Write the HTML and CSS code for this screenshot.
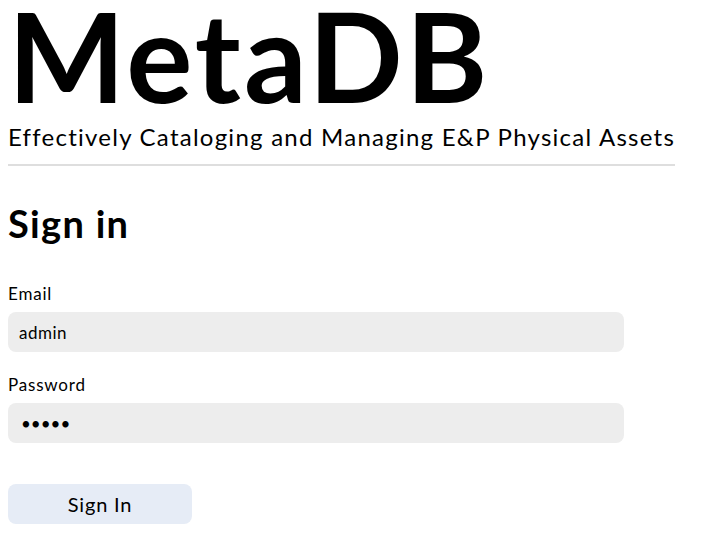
FILE: index.html
```html
<!DOCTYPE html>
<html>
<head>
<meta charset="utf-8">
<link rel="stylesheet" href="styles.css">
</head>
<body>
<header class="brand">
  <h1 class="brand-title">MetaDB</h1>
  <p class="brand-tagline">Effectively Cataloging and Managing E&amp;P Physical Assets</p>
</header>
<main class="signin">
  <h2 class="signin-title">Sign in</h2>
  <form class="signin-form">
    <label class="field">
      <span class="field-label">Email</span>
      <input class="field-input" type="text" value="admin">
    </label>
    <label class="field">
      <span class="field-label">Password</span>
      <input class="field-input field-password" type="password" value="admin">
    </label>
    <button class="signin-button" type="button">Sign In</button>
  </form>
</main>
</body>
</html>
```
FILE: styles.css
```css
html, body {
  margin: 0;
  padding: 0;
  background: #fff;
}
body {
  padding: 0 8px;
  font-family: Lato, "Open Sans", sans-serif;
  color: #000;
}
.brand {
  display: inline-block;
  border-bottom: 2px solid #dedede;
  padding-bottom: 12px;
}
.brand-title {
  margin: 0;
  font-size: 124px;
  line-height: 110px;
  font-weight: 700;
  letter-spacing: 3px;
}
.brand-tagline {
  margin: 12px 0 0;
  font-size: 24px;
  line-height: 30px;
  font-weight: 400;
  letter-spacing: 1.25px;
}
.signin-title {
  margin: 34px 0 0;
  font-size: 38px;
  line-height: 46px;
  font-weight: 700;
  letter-spacing: 1.3px;
}
.signin-form {
  display: flex;
  flex-direction: column;
  align-items: flex-start;
  gap: 23px;
  margin-top: 38px;
}
.field {
  display: flex;
  flex-direction: column;
  gap: 8px;
}
.field-label {
  font-size: 17px;
  line-height: 20px;
  letter-spacing: 0.8px;
}
.field-input {
  width: 616px;
  height: 40px;
  box-sizing: border-box;
  border: none;
  border-radius: 8px;
  background: #ededed;
  padding: 0 11px;
  font-family: inherit;
  font-size: 17px;
  letter-spacing: 0.5px;
  color: #000;
  outline: none;
}
.field-password {
  font-size: 17px;
  letter-spacing: 0;
  padding-left: 13px;
}
.signin-button {
  margin-top: 18px;
  width: 184px;
  height: 40px;
  border: none;
  border-radius: 8px;
  background: #e6ecf6;
  font-family: inherit;
  font-size: 20px;
  letter-spacing: 0.8px;
  color: #000;
}
```
